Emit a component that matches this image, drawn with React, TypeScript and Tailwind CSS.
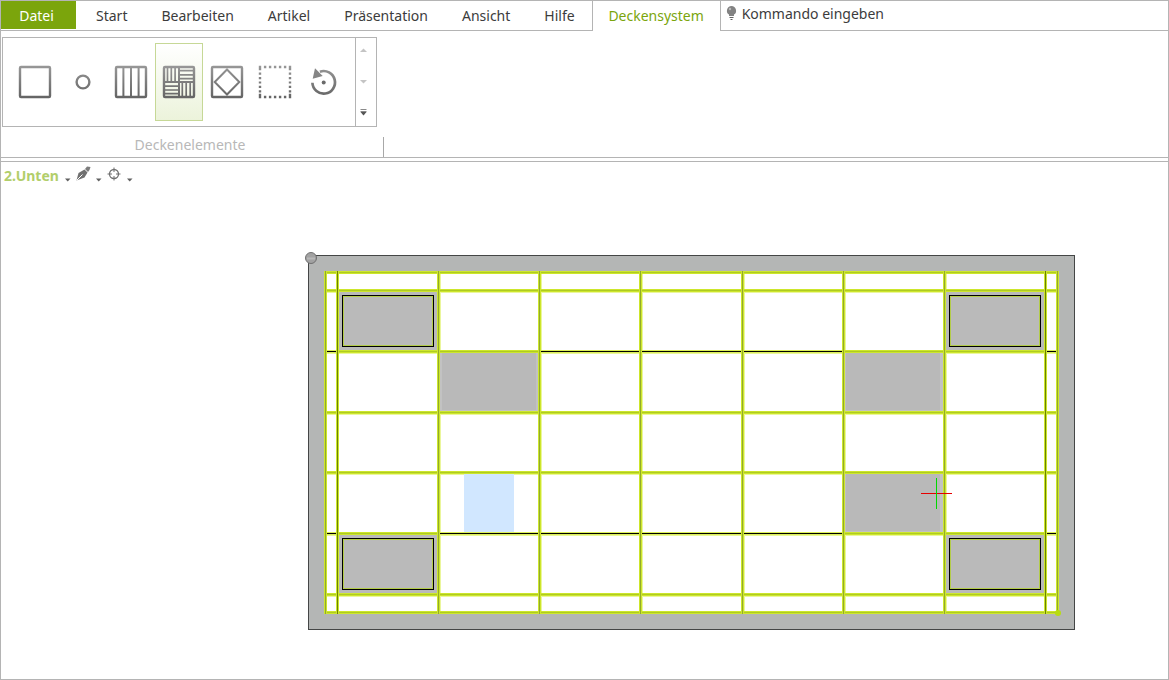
import type { ReactNode } from "react";

const tabs = ["Start", "Bearbeiten", "Artikel", "Präsentation", "Ansicht", "Hilfe"];

function IconSvg({ children }: { children: ReactNode }) {
  return (
    <svg width="36" height="36" viewBox="0 0 36 36" fill="none" stroke="url(#steel)" strokeWidth="2.4" aria-hidden="true">
      {children}
    </svg>
  );
}

const frame = <rect x="3" y="3" width="30" height="30" rx="1" />;

const tools = [
  { name: "Platte", icon: frame },
  { name: "Kreis", icon: <circle cx="18" cy="18" r="6.4" /> },
  {
    name: "Paneele",
    icon: (
      <>
        {frame}
        <path strokeWidth="2" d="M10.4 3V33M18 3V33M25.6 3V33" />
      </>
    ),
  },
  {
    name: "Raster",
    active: true,
    icon: (
      <>
        {frame}
        <path strokeWidth="2" d="M18 3V33M3 18H33" />
        <path
          strokeWidth="1.7"
          d="M6.5 3V17M10.3 3V17M14.1 3V17M18 6.7H33M18 10.8H33M18 14.7H33M3 22.2H17M3 26H17M3 29.7H17M21.3 19V33M25.2 19V33M29.2 19V33"
        />
      </>
    ),
  },
  {
    name: "Raute",
    icon: (
      <>
        {frame}
        <path strokeWidth="2" d="M18 5.5L30.3 18L18 30.5L5.7 18Z" />
      </>
    ),
  },
  {
    name: "Bereich",
    icon: (
      <>
        <path strokeDasharray="2.4 2.6" d="M6.9 3H29.5M6.9 33H29.5" />
        <path strokeDasharray="2.2 2.2" d="M3 8.6V28.4M33 8.6V28.4" />
        <path d="M3 1.8V6.2M33 1.8V6.2M3 29.8V34.2M33 29.8V34.2" />
      </>
    ),
  },
  {
    name: "Drehen",
    icon: (
      <>
        <path strokeWidth="2.7" d="M7.4 18.8A11.3 11.3 0 1 0 14.9 7.7" />
        <path fill="#858585" stroke="none" d="M10 4.3L7.7 14.7L17.7 12Z" />
        <circle cx="18.7" cy="18.4" r="2" fill="#6a6a6a" stroke="none" />
      </>
    ),
  },
];

function Caret() {
  return (
    <svg className="mb-1" width="6" height="4" viewBox="0 0 6 4" aria-hidden="true">
      <path d="M0 0.5H5.5L2.7 3.5Z" fill="#606060" />
    </svg>
  );
}

const columns = [21, 33, 134, 235, 336, 438, 539, 640, 741, 753];
const rows = [22, 40, 101, 162, 222, 283, 344, 362];
const corners = [
  { x: 34, y: 41 },
  { x: 641, y: 41 },
  { x: 34, y: 284 },
  { x: 641, y: 284 },
];
const panels = [
  { x: 135, y: 102 },
  { x: 539, y: 102 },
  { x: 539, y: 223 },
];
// joints that stay uncovered: [x1, x2, y]
const joints = [
  [23, 32, 101],
  [237, 538, 101],
  [743, 752, 101],
  [23, 32, 283],
  [136, 538, 283],
  [743, 752, 283],
];

function CeilingPlan() {
  return (
    <svg width="774" height="384" viewBox="0 0 774 384" shapeRendering="crispEdges" role="img" aria-label="Deckenplan">
      <rect x="4.5" y="5.5" width="766" height="374" fill="#b4b6b5" stroke="#444646" />
      <rect x="22" y="22" width="732" height="340" fill="#fff" />
      {/* soft edge of the profiles, below the panels */}
      <g fill="#eaf69c">
        {rows.slice(1, -1).map((y) => (
          <rect key={y} x="22" y={y - 1} width="732" height="4" />
        ))}
        {columns.slice(2, -2).map((x) => (
          <rect key={x} x={x - 1} y="22" width="4" height="340" />
        ))}
      </g>
      <rect x="160" y="223" width="50" height="60" fill="#d1e7ff" />
      {corners.map((c) => (
        <rect key={`${c.x}-${c.y}`} x={c.x} y={c.y} width="101" height="60" fill="#bababa" />
      ))}
      {panels.map((p) => (
        <g key={`${p.x}-${p.y}`}>
          <rect x={p.x} y={p.y} width="101" height="60" fill="#c2c2c2" />
          <rect x={p.x + 3} y={p.y + 1} width="94" height="57" fill="#b9b9b9" />
        </g>
      ))}
      {rows.map((y) => (
        <g key={y}>
          <rect x="20" y={y - 1} width="735" height="3" fill="#cde62b" />
          <rect x="20" y={y} width="735" height="1" fill="#aecb22" />
        </g>
      ))}
      {joints.map(([x1, x2, y]) => (
        <g key={`${x1}-${y}`}>
          <rect x={x1} y={y - 1} width={x2 - x1} height="3" fill="#dcef58" />
          <rect x={x1} y={y} width={x2 - x1} height="1" fill="#000" />
        </g>
      ))}
      {columns.map((x, i) => (
        <g key={x}>
          <rect x={x - 1} y="21" width="3" height="343" fill="#cde62b" />
          <rect x={x} y="21" width="1" height="343" fill={i === 1 || i === 8 ? "#6b8400" : "#92aa2c"} />
        </g>
      ))}
      {corners.map((c) => (
        <g key={`${c.x}-${c.y}`} fill="none">
          <rect x={c.x + 5.5} y={c.y + 5.5} width="89" height="49" stroke="#b3cc4a" />
          <rect x={c.x + 4.5} y={c.y + 4.5} width="91" height="51" stroke="#000" />
        </g>
      ))}
      <path d="M617 243.5H648" stroke="#e60000" />
      <path d="M632.5 228V259" stroke="#00d800" />
      <g shapeRendering="auto">
        <circle cx="7" cy="8" r="5.5" fill="#a2a2a2" stroke="#707070" />
        <path d="M3 8.5H11" stroke="#b8b8b8" strokeWidth="2" />
        <circle cx="754" cy="363" r="3" fill="#b8dc10" />
      </g>
    </svg>
  );
}

export default function App() {
  return (
    <div className="flex min-h-screen flex-col border border-[#b4b4b4] bg-white font-['Noto_Sans','Open_Sans',sans-serif] text-sm text-[#3c3c3c]">
      <svg className="absolute" width="0" height="0" aria-hidden="true">
        <linearGradient id="steel" gradientUnits="userSpaceOnUse" x1="0" y1="0" x2="0" y2="36">
          <stop offset="0" stopColor="#9a9a9a" />
          <stop offset="1" stopColor="#616161" />
        </linearGradient>
      </svg>
      <nav className="flex h-[30px]">
        <div className="flex border-r border-b border-[#b4b4b4]">
          <button className="mr-[3px] h-7 w-[75px] bg-[#7ba50c] pt-0.5 pr-1 text-white">Datei</button>
          {tabs.map((tab) => (
            <button key={tab} className="h-7 px-[17px] pt-0.5">
              {tab}
            </button>
          ))}
        </div>
        <button className="h-7 w-[127px] pt-0.5 text-[#7ba50c]">Deckensystem</button>
        <label className="flex flex-1 border-b border-l border-[#b4b4b4] pt-[3px] pl-[5px]">
          <svg className="mt-0.5" width="11" height="15" viewBox="0 0 11 15" aria-hidden="true">
            <path d="M5.5 0A4.7 4.7 0 0 0 3 8.6V10H8V8.6A4.7 4.7 0 0 0 5.5 0Z" fill="#828282" />
            <path d="M3.5 11.5H7.5M4.5 13.5H6.5" stroke="#606060" />
            <circle cx="4" cy="3" r="1.2" fill="#bababa" />
          </svg>
          <input
            aria-label="Kommando eingeben"
            placeholder="Kommando eingeben"
            className="ml-[5px] h-5 min-w-0 flex-1 outline-none placeholder:text-[#3c3c3c] placeholder:opacity-100"
          />
        </label>
      </nav>
      <section className="border-b border-[#b4b4b4] pt-1.5">
        <div className="w-[383px]">
          <div className="ml-px flex h-[90px] w-[375px] border border-[#b4b4b4]">
            <div className="flex flex-1 pt-[5px] pl-2">
              {tools.map((tool) => (
                <button
                  key={tool.name}
                  aria-label={tool.name}
                  className={`flex h-[78px] w-12 items-center justify-center border ${
                    tool.active ? "border-[#c6d896] bg-linear-to-b from-white to-[#ecf3db]" : "border-transparent"
                  }`}
                >
                  <IconSvg>{tool.icon}</IconSvg>
                </button>
              ))}
            </div>
            <div className="flex w-[21px] flex-col items-start justify-between border-l border-[#b4b4b4] py-2.5 pl-1">
              <button aria-label="Nach oben">
                <svg width="7" height="5" viewBox="0 0 7 5">
                  <path d="M0 4L3.5 0.5L7 4Z" fill="#c4c4c4" />
                </svg>
              </button>
              <button aria-label="Nach unten">
                <svg width="7" height="5" viewBox="0 0 7 5">
                  <path d="M0 1L3.5 4.5L7 1Z" fill="#c4c4c4" />
                </svg>
              </button>
              <button aria-label="Mehr">
                <svg width="7" height="7" viewBox="0 0 7 7">
                  <path d="M0.5 0.5H6.5M0.5 2.5H6.5" stroke="#8a8a8a" />
                  <path d="M0.5 3L3.5 6.5L6.5 3Z" fill="#555" />
                </svg>
              </button>
            </div>
          </div>
          <div className="flex h-[30px] items-end">
            <h2 className="flex-1 pr-1 pb-0.5 text-center text-[#b8b8b8]">Deckenelemente</h2>
            <span className="h-5 w-px bg-[#a8a8a8]" />
          </div>
        </div>
      </section>
      <main className="mt-[3px] flex-1 border-t border-[#b4b4b4]">
        <div className="flex h-7 items-start gap-[5px] pt-1 pl-[3px]">
          <button className="flex items-end gap-1.5 font-bold text-[#b2ce6b]">
            2.Unten
            <Caret />
          </button>
          <button aria-label="Stift" className="flex h-5 items-end gap-[5px]">
            <svg className="mb-[5px]" width="15" height="15" viewBox="0 0 15 15">
              <path d="M0.5 14.5L2.5 7L8.5 3.5L11.5 6.5L8.5 11.5Z" fill="#707070" />
              <path d="M9 3L11 0.5L14.5 1L13.5 4L12 6Z" fill="#7c7c7c" />
              <path d="M1 14L6.5 8.5" stroke="#fff" />
            </svg>
            <Caret />
          </button>
          <button aria-label="Fangpunkt" className="flex h-5 items-end gap-1.5">
            <svg className="mb-[5px]" width="14" height="14" viewBox="0 0 14 14" fill="none" stroke="#707070">
              <circle cx="7" cy="7" r="4.5" strokeWidth="1.3" />
              <path d="M7 0.5V5M7 9V13.5M0.5 7H5M9 7H13.5" />
            </svg>
            <Caret />
          </button>
        </div>
        <div className="pt-[60px] pl-[303px]">
          <CeilingPlan />
        </div>
      </main>
    </div>
  );
}
